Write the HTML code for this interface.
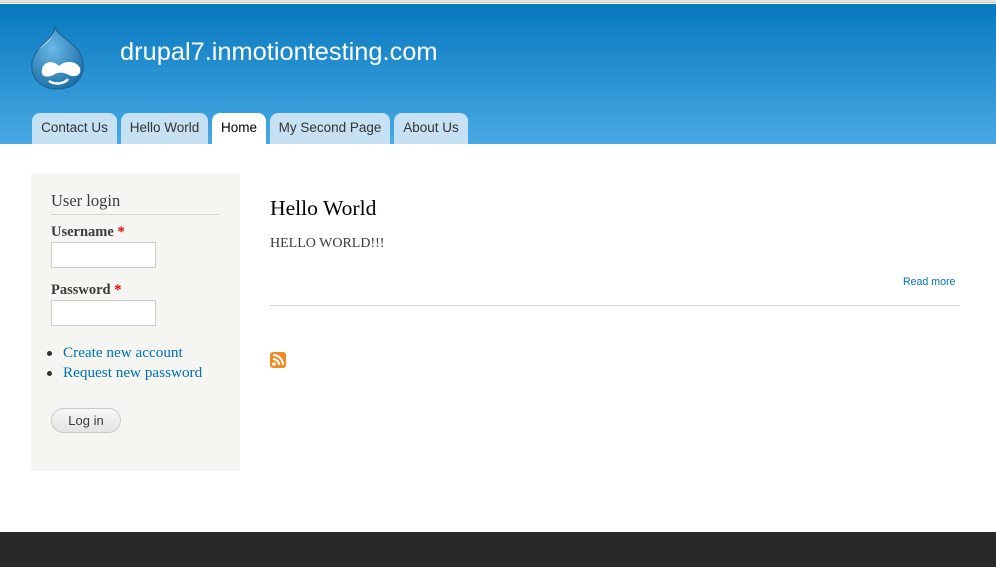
<!DOCTYPE html>
<html><head><meta charset="utf-8">
<style>
*{box-sizing:border-box;margin:0;padding:0}
html,body{width:996px;height:567px;overflow:hidden;background:#fff}
body{font-family:"Liberation Serif",serif;color:#3b3b3b;position:relative}
#top{position:absolute;left:0;top:0;width:996px;height:3px;background:#e2e2e2;border-bottom:1px solid #c8c8c8}
#header{position:absolute;left:0;top:4px;width:996px;height:140px;background:linear-gradient(#0779bf,#48a9e4)}
#logo{position:absolute;left:27px;top:19px}
#site{position:absolute;left:120px;top:34px;font-family:"Liberation Sans",sans-serif;font-size:25.4px;color:#fff}
.tab{position:absolute;top:109px;height:31px;background:#c6e1f4;border-radius:8px 8px 0 0;font-family:"Liberation Sans",sans-serif;font-size:13.5px;color:#333;text-align:center;line-height:30px}
.tab.on{background:#fff;color:#000}
#side{position:absolute;left:31px;top:174px;width:209px;height:297px;background:#f5f5f1}
#side h2{position:absolute;left:20px;top:17px;width:168px;font-weight:normal;font-size:16.5px;color:#3b3b3b;border-bottom:1px solid #d5d5d5;padding-bottom:3px}
.lbl{position:absolute;left:20px;font-weight:bold;font-size:14.5px;color:#3b3b3b}
.lbl span{color:#e00}
.inp{position:absolute;left:20px;width:105px;height:26px;background:#fff;border:1px solid #ccc}
ul{position:absolute;left:16px;top:170px;list-style:none;font-size:15.2px}
ul li{height:20px;color:#0071b3}
ul li:before{content:"";display:inline-block;width:5px;height:5px;background:#333;border-radius:50%;margin-right:11px;vertical-align:middle}
#btn{position:absolute;left:20px;top:234px;width:70px;height:25px;border:1px solid #c9c9c9;border-radius:13px;background:linear-gradient(#f7f7f7,#e4e4e4);font-family:"Liberation Sans",sans-serif;font-size:13px;color:#3a3a3a;text-align:center;line-height:23px}
h1{position:absolute;left:270px;top:196px;font-weight:normal;font-size:21.6px;color:#000}
#body{position:absolute;left:270px;top:236px;font-size:14px}
#more{position:absolute;left:903px;top:276px;font-family:"Liberation Sans",sans-serif;font-size:10.6px;color:#0071b3}
#hr{position:absolute;left:270px;top:305px;width:690px;height:1px;background:#d6d6d6}
#footer{position:absolute;left:0;top:532px;width:996px;height:35px;background:#292929}
</style></head><body>
<div id="top"></div>
<div id="header">
<svg id="logo" width="62" height="70" viewBox="0 0 62 70">
<defs><radialGradient id="g" cx="0.4" cy="0.35" r="0.75"><stop offset="0" stop-color="#6ab8e6"/><stop offset="1" stop-color="#1769a2"/></radialGradient></defs>
<path d="M28 4 C30 12 44 18 51 27 C62 42 56 65 32 66 C9 67 0 48 7 33 C13 21 26 16 28 4Z" fill="url(#g)" stroke="#1d5f8e" stroke-width="1"/>
<path d="M27 9 C25 16 16 20 11 28 C15 23 24 19 27 9Z" fill="#d6eef9" opacity="0.85"/>
<path d="M15 46 C17 38 26 37 32 43 C38 37 50 38 53 45 C55 52 48 55 42 52 C37 49 32 49 28 51 C22 55 13 55 15 46Z" fill="#fff"/>
<path d="M22 58 C28 62 37 61 41 56" stroke="#fff" stroke-width="2.5" fill="none"/>
</svg>
<div id="site">drupal7.inmotiontesting.com</div>
<div class="tab" style="left:32px;width:85px">Contact Us</div>
<div class="tab" style="left:121px;width:87px">Hello World</div>
<div class="tab on" style="left:212px;width:54px">Home</div>
<div class="tab" style="left:270px;width:120px">My Second Page</div>
<div class="tab" style="left:394px;width:74px">About Us</div>
</div>
<div id="side">
<h2>User login</h2>
<div class="lbl" style="top:50px">Username <span>*</span></div>
<div class="inp" style="top:68px"></div>
<div class="lbl" style="top:108px">Password <span>*</span></div>
<div class="inp" style="top:126px"></div>
<ul><li>Create new account</li><li>Request new password</li></ul>
<div id="btn">Log in</div>
</div>
<h1>Hello World</h1>
<div id="body">HELLO WORLD!!!</div>
<div id="more">Read more</div>
<div id="hr"></div>
<svg style="position:absolute;left:270px;top:352px" width="16" height="16" viewBox="0 0 16 16"><rect width="16" height="16" rx="3" fill="#f08a24"/><circle cx="4" cy="12" r="1.8" fill="#fff"/><path d="M3 7a6 6 0 0 1 6 6M3 3a10 10 0 0 1 10 10" stroke="#fff" stroke-width="2" fill="none"/></svg>
<div id="footer"></div>
</body></html>
